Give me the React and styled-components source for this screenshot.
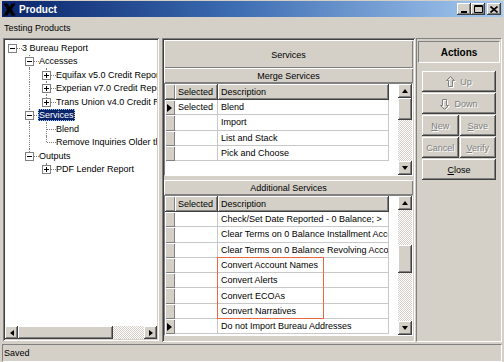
import styled, { createGlobalStyle, css } from "styled-components";

const treeRows = [
    { label: "3 Bureau Report", level: 0, box: "minus", guides: [], last: true, root: true },
    { label: "Accesses", level: 1, box: "minus", guides: [false], last: false },
    { label: "Equifax v5.0 Credit Report", level: 2, box: "plus", guides: [false, true], last: false },
    { label: "Experian v7.0 Credit Report", level: 2, box: "plus", guides: [false, true], last: false },
    { label: "Trans Union v4.0 Credit Report", level: 2, box: "plus", guides: [false, true], last: true },
    { label: "Services", level: 1, box: "minus", guides: [false], last: false, selected: true },
    { label: "Blend", level: 2, guides: [false, true], last: false },
    { label: "Remove Inquiries Older than 90 Days", level: 2, guides: [false, true], last: true },
    { label: "Outputs", level: 1, box: "minus", guides: [false], last: true },
    { label: "PDF Lender Report", level: 2, box: "plus", guides: [false, false], last: true },
];

const mergeRows = [
    { selected: "Selected", desc: "Blend", current: true },
    { selected: "", desc: "Import" },
    { selected: "", desc: "List and Stack" },
    { selected: "", desc: "Pick and Choose" },
];

const additionalRows = [
    { selected: "", desc: "Check/Set Date Reported - 0 Balance; >" },
    { selected: "", desc: "Clear Terms on 0 Balance Installment Accounts" },
    { selected: "", desc: "Clear Terms on 0 Balance Revolving Accounts" },
    { selected: "", desc: "Convert Account Names" },
    { selected: "", desc: "Convert Alerts" },
    { selected: "", desc: "Convert ECOAs" },
    { selected: "", desc: "Convert Narratives" },
    { selected: "", desc: "Do not Import Bureau Addresses", current: true },
];

function VScroll({ before, thumb }) {
    return (
        <VBar>
            <ScrollBtn $w={14} $h={14}><Tri $dir="up" /></ScrollBtn>
            <Track $size={before} />
            <Thumb $w={14} $h={thumb} />
            <Track $grow />
            <ScrollBtn $w={14} $h={14}><Tri $dir="down" /></ScrollBtn>
        </VBar>
    );
}

function ServiceGrid({ rows, height, before, thumb, children }) {
    return (
        <Grid $h={height}>
            <GridBody>
                <HeaderRow>
                    <RowHead $header />
                    <HeadCell $w={43}>Selected</HeadCell>
                    <HeadCell $w={171}>Description</HeadCell>
                </HeaderRow>
                {rows.map((r, index) => (
                    <Row key={index}>
                        <RowHead>{r.current && <Pointer />}</RowHead>
                        <Cell $w={43}>{r.selected}</Cell>
                        <Cell $w={171}>{r.desc}</Cell>
                    </Row>
                ))}
            </GridBody>
            <VScroll before={before} thumb={thumb} />
            {children}
        </Grid>
    );
}

function ArrowIcon({ down }) {
    const d = "M4.5 0.5 L8.5 4.5 L6.5 4.5 L6.5 10.5 L2.5 10.5 L2.5 4.5 L0.5 4.5 Z";
    return (
        <svg width="10" height="12" viewBox="0 0 10 12" style={down ? { transform: "scaleY(-1)" } : undefined}>
            <path d={d} fill="none" stroke="#ffffff" transform={down ? "translate(1,-1)" : "translate(1,1)"} />
            <path d={d} fill="none" stroke="#808080" />
        </svg>
    );
}

export default function App() {
    return (
        <>
            <GlobalStyle />
            <Window>
                <TitleBar>
                    <svg width="13" height="13" viewBox="0 0 13 13">
                        <path d="M0.5 0.5 L4.5 0.5 L6.5 4 L8.5 0.5 L12.5 0.5 L8.8 6.5 L12.5 12.5 L8.5 12.5 L6.5 9 L4.5 12.5 L0.5 12.5 L4.2 6.5 Z" fill="#000" />
                    </svg>
                    <TitleText>Product</TitleText>
                    <TitleButton>
                        <svg width="8" height="8" viewBox="0 0 8 8"><rect x="1" y="6" width="6" height="2" fill="#000" /></svg>
                    </TitleButton>
                    <TitleButton>
                        <svg width="9" height="8" viewBox="0 0 9 8"><path d="M0.5 0.5 H8.5 V7.5 H0.5 Z M0.5 1.5 H8.5" fill="none" stroke="#000" /></svg>
                    </TitleButton>
                    <TitleButton $gap>
                        <svg width="8" height="7" viewBox="0 0 8 7"><path d="M0.5 0.5 L7.5 6.5 M7.5 0.5 L0.5 6.5" stroke="#000" strokeWidth="1.6" /></svg>
                    </TitleButton>
                </TitleBar>

                <Caption>Testing Products</Caption>

                <Body>
                    <TreePanel>
                        <TreeList>
                            {treeRows.map((row, index) => (
                                <TreeRow key={index}>
                                    {row.guides.map((g, i) => <Guide key={i} $line={g} />)}
                                    <Joint $root={row.root} $last={row.last}>
                                        {row.box && <ExpandBox $plus={row.box === "plus"} />}
                                    </Joint>
                                    <TreeLabel $selected={row.selected}>{row.label}</TreeLabel>
                                </TreeRow>
                            ))}
                        </TreeList>
                        <HBar>
                            <ScrollBtn $w={13} $h={13}><Tri $dir="left" /></ScrollBtn>
                            <Thumb $w={95} $h={13} />
                            <Track $grow />
                            <ScrollBtn $w={13} $h={13}><Tri $dir="right" /></ScrollBtn>
                        </HBar>
                    </TreePanel>

                    <MiddlePanel>
                        <PanelTitle>Services</PanelTitle>
                        <Band>Merge Services</Band>
                        <ServiceGrid rows={mergeRows} height={93} before={0} thumb={22} />
                        <Band $top={4}>Additional Services</Band>
                        <ServiceGrid rows={additionalRows} height={141} before={35} thumb={28}>
                            <Highlight />
                        </ServiceGrid>
                    </MiddlePanel>

                    <ActionsPanel>
                        <ActionsTitle>Actions</ActionsTitle>
                        <ButtonStack>
                            <ActionButton disabled $gap={4}><ArrowIcon /><span>Up</span></ActionButton>
                            <ActionButton disabled $gap={4}><ArrowIcon down /><span>Down</span></ActionButton>
                            <ButtonPair>
                                <ActionButton disabled><span><u>N</u>ew</span></ActionButton>
                                <ActionButton disabled><span><u>S</u>ave</span></ActionButton>
                            </ButtonPair>
                            <ButtonPair>
                                <ActionButton disabled><span>Cancel</span></ActionButton>
                                <ActionButton disabled><span><u>V</u>erify</span></ActionButton>
                            </ButtonPair>
                            <ActionButton><span><u>C</u>lose</span></ActionButton>
                        </ButtonStack>
                    </ActionsPanel>
                </Body>

                <StatusBar>
                    <StatusPane>Saved</StatusPane>
                </StatusBar>
            </Window>
        </>
    );
}

const GlobalStyle = createGlobalStyle`
    * { box-sizing: border-box; }
    html, body {
        margin: 0;
        padding: 0;
    }
    body {
        background: #d4d0c8;
        font-family: "Liberation Sans", Arial, sans-serif;
        font-size: 9px;
        color: #000;
    }
`

const raised = css`
    background: #d4d0c8;
    box-shadow: inset 1px 1px #ffffff, inset -1px -1px #808080;
`

const raisedThick = css`
    background: #d4d0c8;
    box-shadow: inset -1px -1px #404040, inset 1px 1px #ffffff, inset -2px -2px #808080;
`

const sunken = css`
    box-shadow: inset 1px 1px #808080, inset -1px -1px #ffffff, inset 2px 2px #404040, inset -2px -2px #d4d0c8;
`

const Window = styled.div`
    width: 504px;
    height: 362px;
    display: flex;
    flex-direction: column;
    padding: 1px 1px 0 2px;
    background: #d4d0c8;
    overflow: hidden;
`

const TitleBar = styled.div`
    height: 16px;
    display: flex;
    align-items: center;
    padding: 0 2px 0 1px;
    background: linear-gradient(90deg, #0a246a 0%, #3a6ab0 45%, #a6caf0 100%);
    flex-shrink: 0;
`

const TitleText = styled.div`
    flex: 1;
    margin-left: 3px;
    color: #ffffff;
    font-weight: bold;
    font-size: 10px;
`

const TitleButton = styled.div`
    width: 14px;
    height: 12px;
    margin-left: ${(props) => (props.$gap ? "2px" : "0")};
    display: flex;
    justify-content: center;
    align-items: center;
    ${raisedThick}
`

const Caption = styled.div`
    height: 21px;
    padding: 6px 0 0 2px;
    line-height: 11px;
    flex-shrink: 0;
`

const Body = styled.div`
    height: 304px;
    display: flex;
    margin-left: 1px;
    flex-shrink: 0;
`

const TreePanel = styled.div`
    width: 156px;
    height: 303px;
    padding: 2px;
    background: #ffffff;
    display: flex;
    flex-direction: column;
    ${sunken}
`

const TreeList = styled.div`
    flex: 1;
    overflow: hidden;
    padding-top: 1px;
`

const TreeRow = styled.div`
    height: 13.5px;
    display: flex;
    align-items: center;
    white-space: nowrap;
`

const Guide = styled.div`
    width: 17px;
    height: 100%;
    flex-shrink: 0;
    position: relative;

    &::before {
        content: "";
        display: ${(props) => (props.$line ? "block" : "none")};
        position: absolute;
        left: 7px;
        top: 0;
        bottom: 0;
        border-left: 1px dotted #808080;
    }
`

const Joint = styled.div`
    width: 17px;
    height: 100%;
    flex-shrink: 0;
    position: relative;

    &::before {
        content: "";
        display: ${(props) => (props.$root ? "none" : "block")};
        position: absolute;
        left: 7px;
        top: 0;
        bottom: ${(props) => (props.$last ? "50%" : "0")};
        border-left: 1px dotted #808080;
    }

    &::after {
        content: "";
        position: absolute;
        left: 8px;
        right: 0;
        top: 50%;
        border-top: 1px dotted #808080;
    }
`

const ExpandBox = styled.div`
    position: absolute;
    z-index: 1;
    left: 3px;
    top: calc(50% - 4px);
    width: 9px;
    height: 9px;
    background: #ffffff;
    border: 1px solid #808080;

    &::before {
        content: "";
        position: absolute;
        left: 1px;
        top: 3px;
        width: 5px;
        height: 1px;
        background: #000;
    }

    &::after {
        content: "";
        display: ${(props) => (props.$plus ? "block" : "none")};
        position: absolute;
        left: 3px;
        top: 1px;
        width: 1px;
        height: 5px;
        background: #000;
    }
`

const TreeLabel = styled.span`
    margin-left: -1px;
    padding: 0 1px;
    height: 12px;
    line-height: 12px;
    background: ${(props) => (props.$selected ? "#0a246a" : "#ffffff")};
    color: ${(props) => (props.$selected ? "#ffffff" : "#000000")};
    outline: ${(props) => (props.$selected ? "1px dotted #a6caf0" : "none")};
    outline-offset: -1px;
`

const HBar = styled.div`
    height: 13px;
    display: flex;
    flex-shrink: 0;
`

const VBar = styled.div`
    width: 14px;
    display: flex;
    flex-direction: column;
    flex-shrink: 0;
`

const ScrollBtn = styled.div`
    width: ${(props) => props.$w}px;
    height: ${(props) => props.$h}px;
    flex-shrink: 0;
    display: flex;
    justify-content: center;
    align-items: center;
    ${raisedThick}
`

const Thumb = styled.div`
    width: ${(props) => props.$w}px;
    height: ${(props) => props.$h}px;
    flex-shrink: 0;
    ${raisedThick}
`

const Track = styled.div`
    flex: ${(props) => (props.$grow ? "1" : "0 0 auto")};
    height: ${(props) => (props.$grow ? "auto" : `${props.$size}px`)};
    background: repeating-conic-gradient(#d4d0c8 0 25%, #ffffff 0 50%) 0 0 / 2px 2px;
`

const arrows = {
    up: css`
        border-left: 3.5px solid transparent;
        border-right: 3.5px solid transparent;
        border-bottom: 4px solid #000;
    `,
    down: css`
        border-left: 3.5px solid transparent;
        border-right: 3.5px solid transparent;
        border-top: 4px solid #000;
    `,
    left: css`
        border-top: 3.5px solid transparent;
        border-bottom: 3.5px solid transparent;
        border-right: 4px solid #000;
    `,
    right: css`
        border-top: 3.5px solid transparent;
        border-bottom: 3.5px solid transparent;
        border-left: 4px solid #000;
    `,
}

const Tri = styled.span`
    width: 0;
    height: 0;
    ${(props) => arrows[props.$dir]}
`

const MiddlePanel = styled.div`
    width: 253px;
    margin-left: 3px;
    padding: 2px;
    display: flex;
    flex-direction: column;
    ${sunken}
`

const PanelTitle = styled.div`
    height: 28px;
    flex-shrink: 0;
    display: flex;
    justify-content: center;
    align-items: center;
    padding-top: 2px;
    ${raised}
`

const Band = styled.div`
    height: 15px;
    margin-top: ${(props) => props.$top || 0}px;
    flex-shrink: 0;
    display: flex;
    justify-content: center;
    align-items: center;
    ${raised}
`

const Grid = styled.div`
    position: relative;
    height: ${(props) => props.$h}px;
    flex-shrink: 0;
    display: flex;
    background: #ffffff;
    border: 1px solid;
    border-color: #808080 #ffffff #ffffff #808080;
`

const GridBody = styled.div`
    flex: 1;
    overflow: hidden;
`

const HeaderRow = styled.div`
    height: 16px;
    display: flex;
`

const Row = styled.div`
    height: 15.3px;
    display: flex;
`

const RowHead = styled.div`
    width: 10px;
    height: 100%;
    flex-shrink: 0;
    display: flex;
    align-items: center;
    padding-left: 2px;
    background: #d4d0c8;
    box-shadow: inset 1px 1px #ffffff, inset -1px -1px #808080;
    border-bottom: ${(props) => (props.$header ? "1px solid #404040" : "none")};
`

const HeadCell = styled.div`
    width: ${(props) => props.$w}px;
    height: 100%;
    flex-shrink: 0;
    display: flex;
    align-items: center;
    padding-left: 3px;
    background: #d4d0c8;
    border-right: 1px solid #404040;
    border-bottom: 1px solid #404040;
    box-shadow: inset 1px 1px #ffffff, inset -1px -1px #808080;
`

const Cell = styled.div`
    width: ${(props) => props.$w}px;
    height: 100%;
    flex-shrink: 0;
    display: flex;
    align-items: center;
    padding-left: 3px;
    overflow: hidden;
    white-space: nowrap;
    border-right: 1px solid #c8c8c8;
    border-bottom: 1px solid #c8c8c8;
`

const Pointer = styled.span`
    width: 0;
    height: 0;
    border-top: 4.5px solid transparent;
    border-bottom: 4.5px solid transparent;
    border-left: 5px solid #000;
`

const Highlight = styled.div`
    position: absolute;
    left: 52px;
    top: 61px;
    width: 107px;
    height: 62px;
    border: 1.5px solid #e8683f;
    pointer-events: none;
`

const ActionsPanel = styled.div`
    width: 86px;
    margin-left: 1px;
    display: flex;
    flex-direction: column;
    border: 1px solid;
    border-color: #808080 #ffffff #ffffff #808080;
`

const ActionsTitle = styled.div`
    height: 22px;
    margin: 2px 1px 0 1px;
    display: flex;
    justify-content: center;
    align-items: center;
    font-weight: bold;
    font-size: 10px;
    border: 1px solid;
    border-color: #808080 #ffffff #ffffff #808080;
`

const ButtonStack = styled.div`
    width: 74px;
    margin: 8px 0 0 5px;
    display: flex;
    flex-direction: column;
    gap: 1px;
`

const ButtonPair = styled.div`
    display: flex;
    gap: 1px;
`

const ActionButton = styled.button`
    flex: 1 1 0;
    min-width: 0;
    min-height: 21px;
    height: 21px;
    padding: 0;
    border: none;
    display: flex;
    justify-content: center;
    align-items: center;
    gap: ${(props) => props.$gap || 2}px;
    font-family: inherit;
    font-size: 9px;
    color: ${(props) => (props.disabled ? "#808080" : "#000000")};
    text-shadow: ${(props) => (props.disabled ? "1px 1px 0 #ffffff" : "none")};
    ${raisedThick}
`

const StatusBar = styled.div`
    height: 19px;
    margin-top: 1px;
    padding: 1px 1px 0 0;
    flex-shrink: 0;
`

const StatusPane = styled.div`
    height: 18px;
    display: flex;
    align-items: center;
    padding-left: 1px;
    border: 1px solid;
    border-color: #808080 #ffffff #ffffff #808080;
`
